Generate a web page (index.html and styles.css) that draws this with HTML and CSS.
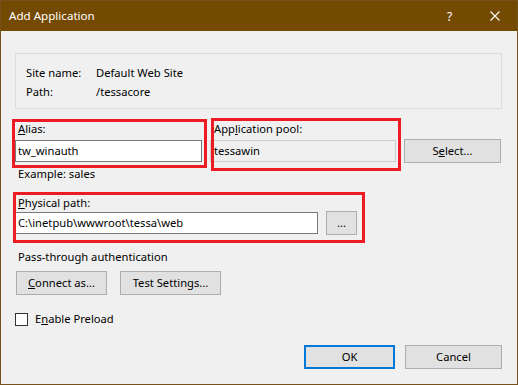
FILE: index.html
```html
<!DOCTYPE html>
<html>
<head>
<meta charset="utf-8">
<link rel="stylesheet" href="styles.css">
</head>
<body>
<div class="window">
  <div class="titlebar">
    <span class="title">Add Application</span>
    <span class="tb-btn help">?</span>
    <span class="tb-btn close"><svg width="10" height="10" viewBox="0 0 10 10"><path d="M0.5 0.5 L9.5 9.5 M9.5 0.5 L0.5 9.5" stroke="#fff" stroke-width="1.1" fill="none"/></svg></span>
  </div>
  <div class="content">
    <div class="info">
      <div class="info-row"><span class="key">Site name:</span><span>Default Web Site</span></div>
      <div class="info-row"><span class="key">Path:</span><span>/tessacore</span></div>
    </div>
    <div class="fields">
      <label class="lbl lbl-alias"><u>A</u>lias:</label>
      <label class="lbl lbl-pool">App<u>l</u>ication pool:</label>
      <span></span>
      <div class="input">tw_winauth</div>
      <div class="input disabled">tessawin</div>
      <button class="btn">S<u>e</u>lect...</button>
    </div>
    <div class="hint">Example: sales</div>
    <label class="lbl lbl-phys"><u>P</u>hysical path:</label>
    <div class="path-row">
      <div class="input path">C:\inetpub\wwwroot\tessa\web</div>
      <button class="btn dots">...</button>
    </div>
    <div class="hint pass">Pass-through authentication</div>
    <div class="auth-row">
      <button class="btn connect"><u>C</u>onnect as...</button>
      <button class="btn test">Test Settin<u>g</u>s...</button>
    </div>
    <div class="check-row">
      <span class="checkbox"></span>
      <span>E<u>n</u>able Preload</span>
    </div>
    <div class="footer">
      <button class="btn ok">OK</button>
      <button class="btn cancel">Cancel</button>
    </div>
  </div>
  <div class="annot annot-alias"></div>
  <div class="annot annot-pool"></div>
  <div class="annot annot-phys"></div>
</div>
</body>
</html>
```
FILE: styles.css
```css
html, body {
  margin: 0;
  padding: 0;
  background: #f0f0f0;
}
body {
  font-family: "Noto Sans", "Open Sans", sans-serif;
  font-size: 11.2px;
  color: #000;
}
.window {
  position: relative;
  width: 518px;
  height: 385px;
  box-sizing: border-box;
  border: 1px solid #75511b;
  background: #f0f0f0;
  display: flex;
  flex-direction: column;
}
.titlebar {
  height: 30px;
  background: #744a03;
  display: flex;
  align-items: center;
  color: #fff;
  flex: none;
}
.title {
  flex: 1;
  padding-left: 8px;
  font-size: 11.6px;
  line-height: 30px;
}
.tb-btn {
  width: 45px;
  height: 30px;
  display: flex;
  align-items: center;
  justify-content: center;
}
.help {
  font-size: 12px;
}
.content {
  flex: 1;
  display: flex;
  flex-direction: column;
  padding: 0 15px 15px 14px;
  line-height: 16px;
}
.info {
  margin-top: 22px;
  border: 1px solid #dcdcdc;
  padding: 9px 10px 7px;
}
.info-row {
  display: flex;
  line-height: 19px;
}
.key {
  width: 70px;
}
.fields {
  margin-top: 12px;
  display: grid;
  grid-template-columns: 187px 186px 97px;
  column-gap: 8px;
  row-gap: 2px;
  align-items: center;
}
.lbl {
  display: block;
  line-height: 16px;
}
.lbl-alias { padding-left: 3px; }
.lbl-pool { padding-left: 4px; }
.lbl-phys { padding-left: 3px; margin-top: 13px; }
.input {
  height: 22px;
  box-sizing: border-box;
  border: 1px solid #7a7a7a;
  background: #fff;
  padding: 0 2px;
  line-height: 20px;
  white-space: nowrap;
  overflow: hidden;
}
.input.disabled {
  background: #f0f0f0;
  border-color: #cccccc;
  padding-left: 3px;
}
.btn {
  height: 24px;
  box-sizing: border-box;
  border: 1px solid #adadad;
  background: #e1e1e1;
  font: inherit;
  color: #000;
  padding: 0;
  line-height: 20px;
  text-align: center;
}
.hint {
  margin-top: 3px;
  padding-left: 3px;
  line-height: 16px;
}
.hint.pass {
  margin-top: 14px;
}
.path-row {
  display: flex;
  align-items: center;
  gap: 8px;
}
.path {
  width: 303px;
}
.dots {
  width: 31px;
}
.auth-row {
  margin-top: 6px;
  display: flex;
  gap: 13px;
  padding-left: 1px;
}
.connect { width: 91px; }
.test { width: 101px; }
.check-row {
  margin-top: 16px;
  display: flex;
  align-items: center;
  gap: 7px;
  line-height: 16px;
}
.checkbox {
  width: 13px;
  height: 13px;
  box-sizing: border-box;
  border: 1px solid #333;
  background: #fff;
}
.footer {
  margin-top: auto;
  display: flex;
  justify-content: flex-end;
  gap: 10px;
}
.ok {
  width: 91px;
  border: 2px solid #0078d7;
}
.cancel { width: 97px; }
.annot {
  position: absolute;
  border: 3px solid #ed1c24;
  box-sizing: border-box;
  pointer-events: none;
}
.annot-alias { left: 11px; top: 118px; width: 195px; height: 49px; }
.annot-pool { left: 210px; top: 117px; width: 190px; height: 53px; }
.annot-phys { left: 12px; top: 191px; width: 352px; height: 51px; }
```
